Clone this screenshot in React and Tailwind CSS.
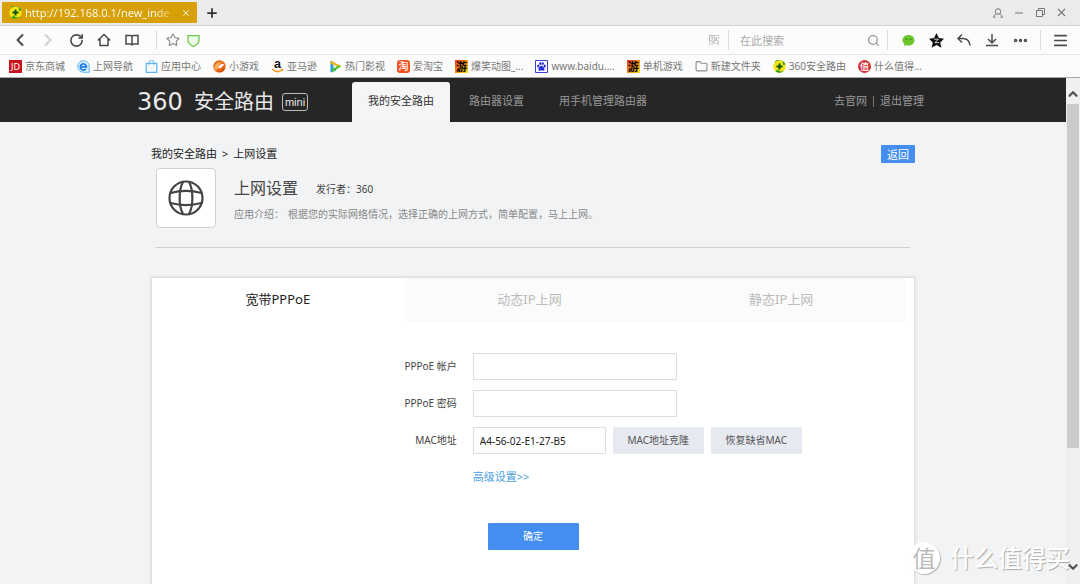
import { useState } from "react";
import {
  ChevronDown,
  ChevronLeft,
  ChevronRight,
  ChevronUp,
  Ellipsis,
  Folder,
  Menu,
  Minus,
  Plus,
  RotateCw,
  Search,
  Star,
  X,
} from "lucide-react";

/* ---------- site icons ---------- */

const Icon360 = () => (
  <svg viewBox="0 0 26 26" className="size-[13px] shrink-0" aria-hidden="true">
    <circle cx="13" cy="13" r="12.5" fill="#f7e413" />
    <path d="M3 6A12.500 12.500 0 0 1 25 9L20 10A8 8 0 0 0 3 6Z" fill="#2f9e1c" />
    <path d="M23 20A12.500 12.500 0 0 1 5 23L9 19A9 9 0 0 0 23 20Z" fill="#2f9e1c" />
    <path d="M13 7v12M7 13h12" stroke="#0b5a12" strokeWidth="4" />
  </svg>
);

const IconJD = () => (
  <span className="flex size-[13px] shrink-0 items-center justify-center bg-[#c8141e] text-[9px] leading-none text-white">
    JD
  </span>
);

const IconCompass = () => (
  <svg viewBox="0 0 26 26" className="size-[13px] shrink-0" aria-hidden="true">
    <path d="M13 1.500A11.500 11.500 0 1 0 13 24.500H24.500V13A11.500 11.500 0 0 0 13 1.500Z" fill="#e6f3fd" stroke="#4fb0f4" strokeWidth="2" />
    <path d="M18 17.500A6.200 6.200 0 1 1 19 13.500H8" fill="none" stroke="#1d7fe6" strokeWidth="3.500" />
  </svg>
);

const IconBag = () => (
  <svg viewBox="0 0 26 26" className="size-[13px] shrink-0" aria-hidden="true">
    <path d="M2.500 6.500H23.500V24.500H2.500Z" fill="#f3faff" stroke="#5fb4f2" strokeWidth="2.500" />
    <path d="M8 10V5a5 4.500 0 0 1 10 0v5" fill="none" stroke="#5fb4f2" strokeWidth="2" />
  </svg>
);

const IconGame = () => (
  <svg viewBox="0 0 26 26" className="size-[13px] shrink-0" aria-hidden="true">
    <circle cx="13" cy="13" r="12.500" fill="#ea6a17" />
    <path d="M3 19C1 9 9 2 20 5C14 6 11 9 12 13C10 18 7 20 3 19Z" fill="#f9b45a" />
    <path d="M11 14C13 8 19 7 22 9C20 12 17 17 12 17Z" fill="#fff" />
    <path d="M8 23C15 24 20 20 22 14C24 20 17 27 8 23Z" fill="#c2410c" />
  </svg>
);

const IconAmazon = () => (
  <svg viewBox="0 0 26 26" className="size-[13px] shrink-0 overflow-visible" aria-hidden="true">
    <text x="13" y="16" textAnchor="middle" fontFamily="Liberation Sans, sans-serif" fontWeight="700" fontSize="25" fill="#111">
      a
    </text>
    <path d="M2 18C9 24 17 24 22 20" fill="none" stroke="#f79a1c" strokeWidth="3" />
    <path d="M19 18L25 17L23 23Z" fill="#f79a1c" />
  </svg>
);

const IconVideo = () => (
  <svg viewBox="0 0 26 26" className="size-[13px] shrink-0" aria-hidden="true">
    <path d="M3 1L14 7V21L3 25Z" fill="#1ea0ee" />
    <path d="M2 1L25 12L14 14L4 7Z" fill="#f9b50f" />
    <path d="M25 12L6 25L7 16L14 12Z" fill="#4bbd2b" />
    <path d="M9 9L16 13L9 17Z" fill="#fff" />
  </svg>
);

const IconTao = () => (
  <span className="flex size-[13px] shrink-0 items-center justify-center rounded-[3px] bg-[#f4511e] text-[10px] font-medium leading-none text-white">
    淘
  </span>
);

const IconYou = () => (
  <span className="flex size-[13px] shrink-0 items-center justify-center bg-linear-to-br from-[#f0281a] via-[#f58a12] to-[#fbe21b] text-[11px] font-bold leading-none text-black">
    游
  </span>
);

const IconPaw = () => (
  <svg viewBox="0 0 26 26" className="size-[13px] shrink-0" aria-hidden="true">
    <path d="M1 1H25V25H1Z" fill="#fff" stroke="#3a3fe0" strokeWidth="2" />
    <g fill="#2a30dc">
      <ellipse cx="6.500" cy="12" rx="2.200" ry="3" />
      <ellipse cx="10.500" cy="7" rx="2.200" ry="3" />
      <ellipse cx="15.500" cy="7" rx="2.200" ry="3" />
      <ellipse cx="19.500" cy="12" rx="2.200" ry="3" />
      <path d="M13 11.500C16 11.500 20 17 19 20C18 22.500 15 21 13 21S8 22.500 7 20C6 17 10 11.500 13 11.500Z" />
    </g>
  </svg>
);

const IconFolder = () => (
  <Folder className="size-[13px] shrink-0 text-[#8a8a8a]" strokeWidth={2} aria-hidden="true" />
);

const IconZhi = () => (
  <span className="flex size-[13px] shrink-0 items-center justify-center rounded-full bg-[#d6303a] text-[9px] font-medium leading-none text-white">
    值
  </span>
);

const BOOKMARKS = [
  { label: "京东商城", Icon: IconJD },
  { label: "上网导航", Icon: IconCompass },
  { label: "应用中心", Icon: IconBag },
  { label: "小游戏", Icon: IconGame },
  { label: "亚马逊", Icon: IconAmazon },
  { label: "热门影视", Icon: IconVideo },
  { label: "爱淘宝", Icon: IconTao },
  { label: "爆笑动图_...", Icon: IconYou },
  { label: "www.baidu....", Icon: IconPaw },
  { label: "单机游戏", Icon: IconYou },
  { label: "新建文件夹", Icon: IconFolder },
  { label: "360安全路由", Icon: Icon360 },
  { label: "什么值得...", Icon: IconZhi },
];

/* ---------- browser window ---------- */

const IconButton = ({ label, className = "", children }) => (
  <button
    type="button"
    aria-label={label}
    className={`flex size-4 shrink-0 items-center justify-center ${className}`}
  >
    {children}
  </button>
);

const Divider = () => <span className="h-5 w-px shrink-0 bg-[#dcdcdc]" />;

const TitleBar = () => (
  <div className="flex h-[26px] items-center border-b border-[#d2d2d2] bg-[#ebebeb] pl-[2px] pr-[11px]">
    <div className="flex h-[21px] w-[195px] items-center rounded-[1px] bg-[#d6a006] pl-[7px] pr-[3px]">
      <Icon360 />
      <span className="ml-[3px] whitespace-nowrap bg-linear-to-r from-white from-90% to-white/30 bg-clip-text text-[11px] leading-4 text-transparent">
        http://192.168.0.1/new_inde
      </span>
      <IconButton label="关闭标签页" className="ml-auto text-white">
        <X size={10} strokeWidth={2} />
      </IconButton>
    </div>
    <IconButton label="新建标签页" className="ml-[7px] text-[#333]">
      <Plus size={14} strokeWidth={3} />
    </IconButton>
    <div className="ml-auto flex gap-[5px] text-[#777]">
      <IconButton label="用户">
        <svg viewBox="0 0 20 20" width="10" height="10" fill="none" stroke="currentColor" strokeWidth="2">
          <circle cx="10" cy="7" r="5.500" />
          <path d="M7 12C3 13 1.500 15 1.500 19M13 12C17 13 18.500 15 18.500 19M1 18.500H5M15 18.500H19" />
        </svg>
      </IconButton>
      <IconButton label="最小化">
        <Minus size={12} strokeWidth={2} />
      </IconButton>
      <IconButton label="还原">
        <svg viewBox="0 0 18 18" width="9" height="9" fill="none" stroke="currentColor" strokeWidth="2">
          <path d="M1 5H13V17H1ZM5 5V1H17V13H13" />
        </svg>
      </IconButton>
      <IconButton label="关闭">
        <X size={13} strokeWidth={2} />
      </IconButton>
    </div>
  </div>
);

const ToolBar = () => (
  <div className="flex h-[29px] items-center border-b border-[#e4e4e4] bg-[#fcfcfc] px-3 text-[#4a4a4a]">
    <div className="flex gap-3">
      <IconButton label="后退">
        <ChevronLeft size={20} strokeWidth={2.4} className="shrink-0" />
      </IconButton>
      <IconButton label="前进" className="text-[#cfcfcf]">
        <ChevronRight size={20} strokeWidth={2.4} className="shrink-0" />
      </IconButton>
      <IconButton label="刷新">
        <RotateCw size={15} strokeWidth={2.6} />
      </IconButton>
      <IconButton label="主页">
        <svg viewBox="0 0 28 28" width="14" height="14" fill="none" stroke="currentColor" strokeWidth="3">
          <path d="M1.500 15L14 3L26.500 15M6 12V25H22V12" />
        </svg>
      </IconButton>
      <IconButton label="阅读">
        <svg viewBox="0 0 28 28" width="14" height="14" fill="none" stroke="currentColor" strokeWidth="3">
          <path d="M2 5H11Q14 5 14 8Q14 5 17 5H26V22H17Q14 22 14 25Q14 22 11 22H2ZM14 7V24" />
        </svg>
      </IconButton>
    </div>
    <span className="ml-4 flex">
      <Divider />
    </span>
    <div className="ml-2 flex gap-1">
      <IconButton label="收藏" className="text-[#8a8a8a]">
        <Star size={14} strokeWidth={2} />
      </IconButton>
      <IconButton label="安全">
        <svg viewBox="0 0 26 26" width="13" height="13">
          <path d="M2 3H24V13C24 19 19 22 13 25C7 22 2 19 2 13Z" fill="#eefbe6" stroke="#6cc648" strokeWidth="2.500" />
        </svg>
      </IconButton>
    </div>
    <input aria-label="地址栏" className="mx-2 h-5 min-w-0 flex-1 bg-transparent text-[11px] outline-none" />
    <IconButton label="二维码" className="mr-[6px] text-[#b5b5b5]">
      <svg viewBox="0 0 20 20" width="10" height="10" fill="none" stroke="currentColor" strokeWidth="2">
        <path d="M1 1H12V12H1ZM4.500 5H9M4.500 8H9M15 1H19M19 4V8M15 5V12M17 12H20M1 15V19M4 18H8M7 15H11M12 18V15M15 18H20M16 15H19" />
      </svg>
    </IconButton>
    <Divider />
    <label className="flex w-[158px] items-center pl-[11px] pr-[6px]">
      <input
        aria-label="搜索"
        placeholder="在此搜索"
        className="h-5 min-w-0 flex-1 bg-transparent text-[11px] outline-none placeholder:text-[#aaa]"
      />
      <IconButton label="开始搜索" className="text-[#999]">
        <Search size={13} strokeWidth={2.4} />
      </IconButton>
    </label>
    <Divider />
    <div className="ml-3 mr-3 flex gap-3">
      <IconButton label="微信">
        <svg viewBox="0 0 26 26" width="13" height="13">
          <path d="M13 2C20 2 25 6.500 25 12.500S20 23 13 23C11.500 23 10 22.800 9 22.500L4 24L5 20C2.500 18 1 15.500 1 12.500C1 6.500 6 2 13 2Z" fill="#6cc62c" />
          <circle cx="8.500" cy="10" r="1.700" fill="#2f7d0c" />
          <circle cx="17.500" cy="10" r="1.700" fill="#2f7d0c" />
        </svg>
      </IconButton>
      <IconButton label="QQ空间">
        <svg viewBox="0 0 28 28" width="15" height="15">
          <path d="M14 0L18.500 9.500L28 10.500L21 17.500L23 27.500L14 22.500L5 27.500L7 17.500L0 10.500L9.500 9.500Z" fill="#111" />
          <path d="M9.500 11.500H17.500L11 18H18.500" fill="none" stroke="#fff" strokeWidth="1.500" />
        </svg>
      </IconButton>
      <IconButton label="撤销">
        <svg viewBox="0 0 28 28" width="14" height="14" fill="none" stroke="currentColor" strokeWidth="3">
          <path d="M10 3L2 11L10 19M2 11H12C20 11 25 16 26 25" />
        </svg>
      </IconButton>
      <IconButton label="下载">
        <svg viewBox="0 0 28 28" width="14" height="14" fill="none" stroke="currentColor" strokeWidth="3">
          <path d="M14 2V20M6 12L14 20L22 12M2 25H26" />
        </svg>
      </IconButton>
      <IconButton label="更多">
        <Ellipsis size={17} strokeWidth={3} className="shrink-0" />
      </IconButton>
    </div>
    <Divider />
    <span className="ml-[11px] flex">
      <IconButton label="菜单">
        <Menu size={17} strokeWidth={2.4} className="shrink-0" />
      </IconButton>
    </span>
  </div>
);

const BookmarkBar = () => (
  <nav className="flex h-[23px] items-center gap-3 border-b border-[#a8a8a8] bg-[#fcfcfc] pl-[9px]">
    {BOOKMARKS.map(({ label, Icon }) => (
      <a key={label} href="#" className="flex items-center gap-[3px] whitespace-nowrap text-[10px] leading-4 text-[#777]">
        <Icon />
        {label}
      </a>
    ))}
  </nav>
);

const ScrollBar = () => (
  <div className="flex w-[14px] shrink-0 flex-col items-center bg-[#f0f0f0] text-[#555]">
    <div className="flex h-[26px] items-center pt-[6px]">
      <ChevronUp size={14} strokeWidth={4} />
    </div>
    <div className="w-3 grow-76 basis-0 bg-[#cbcbcb]" />
    <div className="grow-24 basis-0" />
    <div className="flex h-7 items-start pt-1">
      <ChevronDown size={14} strokeWidth={4} />
    </div>
  </div>
);

/* ---------- router page ---------- */

const NAV = ["我的安全路由", "路由器设置", "用手机管理路由器"];

const SiteHeader = () => (
  <header className="bg-[#262626]">
    <div className="mx-auto flex h-11 max-w-[792px] items-center text-[11px] text-[#999]">
      <a href="#" className="flex w-[215px] shrink-0 items-center whitespace-nowrap pt-1 text-[#e8e8e8]">
        <span className="w-[57px] font-['DejaVu_Sans'] text-[24px] leading-7">360</span>
        <span className="text-[20px] leading-7">安全路由</span>
        <span className="ml-2 flex h-[18px] w-[26px] items-center justify-center rounded-[3px] border border-[#bbb] font-['Liberation_Sans'] text-[11px] leading-none">
          mini
        </span>
      </a>
      <nav className="flex h-full gap-[3px] pt-1">
        {NAV.map((item, i) => (
          <a
            key={item}
            href="#"
            className={`flex items-center whitespace-nowrap rounded-t-[3px] px-4 pb-[2px] ${
              i === 0 ? "bg-[#f5f5f5] text-[#333]" : ""
            }`}
          >
            {item}
          </a>
        ))}
      </nav>
      <div className="ml-auto flex items-center gap-[6px] whitespace-nowrap pr-[5px] pt-[3px]">
        <a href="#">去官网</a>
        <span className="h-[11px] w-px bg-[#777]" />
        <a href="#">退出管理</a>
      </div>
    </div>
  </header>
);

const PageIntro = () => (
  <>
    <div className="flex h-[18px] items-center justify-between">
      <div className="text-[11px] text-[#222]">
        <a href="#">我的安全路由</a>
        <span className="mx-[5px]">&gt;</span>
        <a href="#">上网设置</a>
      </div>
      <button type="button" className="h-[18px] w-[34px] rounded-[1px] bg-[#438eee] text-[11px] leading-none text-white">
        返回
      </button>
    </div>
    <div className="mx-[5px] mt-[5px] flex gap-[18px] border-b border-[#cfcfcf] pb-[19px]">
      <div className="flex size-[60px] shrink-0 items-center justify-center rounded-[4px] border border-[#d0d0d0] bg-white">
        <svg viewBox="0 0 36 36" className="size-9" fill="none" stroke="#444" strokeWidth="2.200" aria-hidden="true">
          <circle cx="18" cy="18" r="16.500" />
          <path d="M15 2C10.500 10 10.500 26 15 34M21 2C25.500 10 25.500 26 21 34" />
          <path d="M2.500 13C12 10.500 24 10.500 33.500 13M2.500 23C12 25.500 24 25.500 33.500 23" />
        </svg>
      </div>
      <div className="pt-2">
        <div className="flex items-center gap-[18px]">
          <h1 className="text-[16px] leading-6 text-[#444]">上网设置</h1>
          <span className="pt-[2px] text-[10px] leading-4 text-[#444]">发行者：360</span>
        </div>
        <p className="mt-[6px] flex gap-1 text-[10px] leading-4 text-[#888]">
          <span>应用介绍：</span>
          <span>根据您的实际网络情况，选择正确的上网方式，简单配置，马上上网。</span>
        </p>
      </div>
    </div>
  </>
);

const TABS = ["宽带PPPoE", "动态IP上网", "静态IP上网"];

const inputClass = "h-[27px] border border-[#dedede] bg-white px-[6px] text-[10px] text-[#222] outline-none";
const greyButtonClass = "h-[27px] w-[91px] rounded-[1px] bg-[#e6e9f0] text-[10px] text-[#555]";

const Field = ({ id, label, children }) => (
  <div className="flex items-center gap-4">
    <label htmlFor={id} className="w-2/5 text-right text-[10px] text-[#444]">
      {label}
    </label>
    <div className="flex gap-[7px]">{children}</div>
  </div>
);

const SettingsCard = () => {
  const [activeTab, setActiveTab] = useState(0);
  const [mac, setMac] = useState("A4-56-02-E1-27-B5");

  return (
    <section className="mt-[29px] flex-1 border border-b-0 border-[#e0e1e3] bg-white shadow-[0_0_3px_rgba(0,0,0,0.12)]">
      <div className="mr-[7px] flex" role="tablist">
        {TABS.map((tab, i) => (
          <button
            key={tab}
            type="button"
            role="tab"
            aria-selected={i === activeTab}
            onClick={() => setActiveTab(i)}
            className={`h-11 flex-1 text-[13px] ${
              i === activeTab ? "bg-white text-[#222]" : "bg-[#fbfbfb] text-[#bbb]"
            }`}
          >
            {tab}
          </button>
        ))}
      </div>
      <form className="flex flex-col gap-[10px] pt-[31px]" onSubmit={(e) => e.preventDefault()}>
        <Field id="account" label="PPPoE 帐户">
          <input id="account" className={`${inputClass} w-[204px]`} />
        </Field>
        <Field id="password" label="PPPoE 密码">
          <input id="password" type="password" className={`${inputClass} w-[204px]`} />
        </Field>
        <Field id="mac" label="MAC地址">
          <input
            id="mac"
            value={mac}
            onChange={(e) => setMac(e.target.value)}
            className={`${inputClass} w-[133px]`}
          />
          <button type="button" className={greyButtonClass}>
            MAC地址克隆
          </button>
          <button type="button" className={greyButtonClass}>
            恢复缺省MAC
          </button>
        </Field>
        <div className="flex gap-4 pt-[5px]">
          <span className="w-2/5" />
          <a href="#" className="text-[11px] leading-4 text-[#4a9fdd]">
            高级设置&gt;&gt;
          </a>
        </div>
        <button
          type="submit"
          className="mx-auto mt-7 h-[27px] w-[91px] rounded-[1px] bg-[#438eee] text-[10px] text-white"
        >
          确定
        </button>
      </form>
    </section>
  );
};

const Watermark = () => (
  <div className="pointer-events-none absolute bottom-[10px] right-[10px] flex items-center gap-[10px] text-white">
    <span className="flex size-8 items-center justify-center rounded-full bg-white text-[23px] leading-none text-[#bbb] shadow-[1px_1px_1px_rgba(0,0,0,0.25)]">
      值
    </span>
    <span className="text-[24px] font-medium leading-8 text-shadow-[1px_1px_1px_rgba(0,0,0,0.3)]">什么值得买</span>
  </div>
);

export default function App() {
  return (
    <div className="relative flex h-screen flex-col overflow-hidden bg-[#f2f3f5] font-['Noto_Sans','Noto_Sans_CJK_SC',sans-serif]">
      <TitleBar />
      <ToolBar />
      <BookmarkBar />
      <div className="flex min-h-0 flex-1">
        <div className="flex min-w-0 flex-1 flex-col">
          <SiteHeader />
          <main className="mx-auto flex w-full max-w-[764px] flex-1 flex-col pt-[23px]">
            <PageIntro />
            <SettingsCard />
          </main>
        </div>
        <ScrollBar />
      </div>
      <Watermark />
    </div>
  );
}
